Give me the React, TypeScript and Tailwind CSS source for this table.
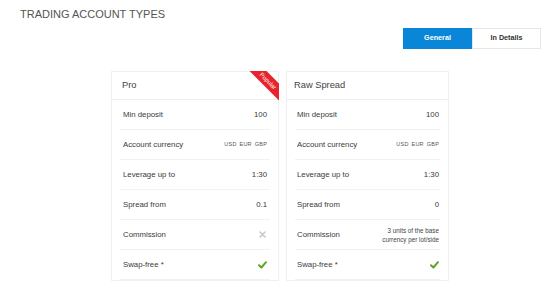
import React from "react";

const Check = () => (
  <svg width="9" height="8" viewBox="0 0 9 8">
    <path d="M1 4.2 L3.4 6.5 L8 1.2" fill="none" stroke="#5ea428" strokeWidth="2" strokeLinecap="round" strokeLinejoin="round" />
  </svg>
);

const Cross = () => (
  <svg width="7" height="7" viewBox="0 0 7 7">
    <path d="M1 1 L6 6 M6 1 L1 6" fill="none" stroke="#c8c8c8" strokeWidth="1.6" strokeLinecap="round" />
  </svg>
);

type Row = { label: string; value: React.ReactNode };

function Currencies() {
  return (
    <span className="flex gap-[3px] text-[5.5px] text-[#555] tracking-[0.2px]">
      <span>USD</span>
      <span>EUR</span>
      <span>GBP</span>
    </span>
  );
}

function Card({
  title,
  rows,
  popular,
  wClass,
  padClass,
  headPad,
}: {
  title: string;
  rows: Row[];
  popular?: boolean;
  wClass: string;
  padClass: string;
  headPad: string;
}) {
  return (
    <div className={`relative ${wClass} bg-white border border-[#f0f0f0] shadow-[0_0_2px_rgba(0,0,0,0.03)] shrink-0`}>
      {popular && (
        <div className="absolute top-[-1px] right-[-1px] w-[31px] h-[31px] overflow-hidden">
          <div className="absolute left-[-3px] top-[4px] w-[46px] h-[12px] bg-[#e9232b] rotate-45 flex items-center justify-center text-white text-[6px] leading-none">
            Popular
          </div>
        </div>
      )}
      <div className={`h-[28px] border-b border-[#ededed] flex items-center ${headPad} text-[9.3px] text-[#444]`}>
        {title}
      </div>
      {rows.map((r, i) => (
        <div key={i} className="mx-[8px] h-[30px] border-b border-[#f2f2f2] flex items-center justify-between">
          <span className={`${padClass} text-[7.8px] text-[#3a3a3a]`}>{r.label}</span>
          <span className="text-[7.8px] text-[#3a3a3a] text-right">{r.value}</span>
        </div>
      ))}
    </div>
  );
}

export default function App() {
  const proRows: Row[] = [
    { label: "Min deposit", value: <span className="pr-[3px]">100</span> },
    { label: "Account currency", value: <span className="pr-[3px] block"><Currencies /></span> },
    { label: "Leverage up to", value: <span className="pr-[3px]">1:30</span> },
    { label: "Spread from", value: <span className="pr-[3px]">0.1</span> },
    { label: "Commission", value: <span className="pr-[4px] flex"><Cross /></span> },
    { label: "Swap-free *", value: <span className="pr-[3px] flex"><Check /></span> },
  ];
  const rawRows: Row[] = [
    { label: "Min deposit", value: <span className="pr-[1px]">100</span> },
    { label: "Account currency", value: <span className="pr-[1px] block"><Currencies /></span> },
    { label: "Leverage up to", value: <span className="pr-[1px]">1:30</span> },
    { label: "Spread from", value: <span className="pr-[1px]">0</span> },
    {
      label: "Commission",
      value: (
        <span className="pr-[1px] block text-[6.3px] leading-[9px] text-[#444]">
          3 units of the base
          <br />
          currency per lot/side
        </span>
      ),
    },
    { label: "Swap-free *", value: <span className="pr-[1px] flex"><Check /></span> },
  ];

  return (
    <div className="w-[554px] h-[281px] overflow-hidden bg-white" style={{ fontFamily: '"Liberation Sans", Arial, sans-serif' }}>
      <div className="pl-[20px] pt-[8px] text-[11px] leading-[13px] text-[#555]">TRADING ACCOUNT TYPES</div>
      <div className="flex justify-end pr-[13px] mt-[7px]">
        <div className="flex h-[21px]">
          <div className="w-[69px] bg-[#0a86d8] text-white text-[7.2px] font-bold flex items-center justify-center">General</div>
          <div className="w-[69px] bg-white border border-[#e6e6e6] text-[#333] text-[7.2px] font-bold flex items-center justify-center">In Details</div>
        </div>
      </div>
      <div className="flex gap-[7px] pl-[111px] mt-[22px]">
        <Card title="Pro" rows={proRows} popular wClass="w-[168px]" padClass="pl-[3px]" headPad="pl-[10px]" />
        <Card title="Raw Spread" rows={rawRows} wClass="w-[163px]" padClass="pl-[2px]" headPad="pl-[7px]" />
      </div>
    </div>
  );
}
